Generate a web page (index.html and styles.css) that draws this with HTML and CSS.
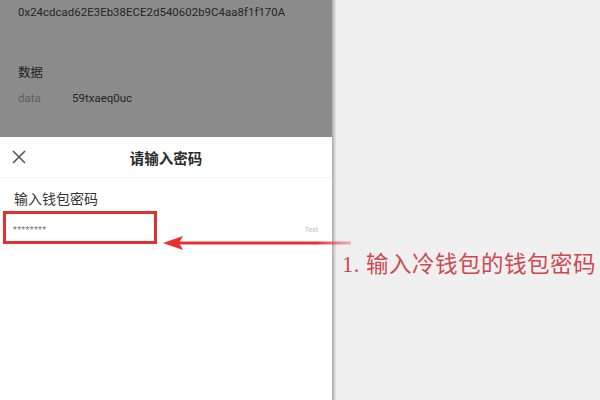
FILE: index.html
```html
<!DOCTYPE html>
<html>
<head>
<meta charset="utf-8">
<link rel="stylesheet" href="styles.css">
</head>
<body>
<div class="page">
  <div class="phone">
    <div class="dim">
      <div class="addr">0x24cdcad62E3Eb38ECE2d540602b9C4aa8f1f170A</div>
      <div class="sec-title">数据</div>
      <div class="kv"><span class="k">data</span><span class="v">59txaeq0uc</span></div>
    </div>
    <div class="sheet">
      <div class="sheet-head">
        <svg class="close" width="16" height="16" viewBox="0 0 16 16"><path d="M2 2 L14 14 M14 2 L2 14" stroke="#555" stroke-width="1.6" fill="none"/></svg>
        <div class="sheet-title">请输入密码</div>
      </div>
      <div class="field-label">输入钱包密码</div>
      <div class="field">
        <span class="dots">********</span>
        <span class="hint">Text</span>
      </div>
    </div>
  </div>
  <div class="divider"></div>
  <div class="notes">
    <div class="note">1. 输入冷钱包的钱包密码</div>
  </div>
  <div class="mark"></div>
  <svg class="arrow" width="200" height="20" viewBox="0 0 200 20">
    <defs>
      <linearGradient id="g" x1="0" x2="1" y1="0" y2="0">
        <stop offset="0" stop-color="#e8302c"/>
        <stop offset="0.8" stop-color="#e8302c"/>
        <stop offset="1" stop-color="#e8302c" stop-opacity="0.3"/>
      </linearGradient>
    </defs>
    <rect x="14" y="8.5" width="174" height="3" fill="url(#g)"/>
    <path d="M0 10 L20 3 L16 10 L20 17 Z" fill="#e8302c"/>
  </svg>
</div>
</body>
</html>
```
FILE: styles.css
```css
html, body {
  margin: 0;
  padding: 0;
}
body {
  width: 600px;
  height: 400px;
  overflow: hidden;
  font-family: Roboto, "Noto Sans CJK SC", sans-serif;
  background: #f0f0f0;
}
.page {
  position: relative;
  display: flex;
  width: 600px;
  height: 400px;
}
.phone {
  width: 332px;
  flex: none;
  display: flex;
  flex-direction: column;
  background: #fff;
}
.dim {
  height: 137px;
  background: #8b8b8b;
  padding: 5px 0 0 18px;
  box-sizing: border-box;
  color: #262626;
}
.addr {
  font-size: 11.4px;
  line-height: 14px;
  letter-spacing: 0.05px;
}
.sec-title {
  margin-top: 46px;
  font-size: 12.5px;
  line-height: 16px;
  color: #222;
}
.kv {
  margin-top: 10px;
  font-size: 11.5px;
  line-height: 14px;
  display: flex;
}
.k {
  width: 54px;
  color: #5e5e5e;
}
.v {
  color: #262626;
}
.sheet {
  flex: 1;
  background: #fff;
  display: flex;
  flex-direction: column;
}
.sheet-head {
  height: 40px;
  display: flex;
  align-items: center;
  position: relative;
  border-bottom: 1px solid #f2f2f2;
  padding-left: 11px;
}
.close {
  display: block;
}
.sheet-title {
  flex: 1;
  text-align: center;
  font-size: 14.5px;
  font-weight: 700;
  color: #2a2a2a;
  margin-right: 27px;
}
.field-label {
  margin: 12px 0 0 14px;
  font-size: 14px;
  line-height: 18px;
  color: #333;
}
.field {
  margin-top: 6px;
  height: 32px;
  display: flex;
  align-items: center;
  justify-content: space-between;
  padding: 0 14px 0 13px;
}
.dots {
  font-size: 9px;
  color: #777;
  letter-spacing: 0.3px;
}
.hint {
  font-size: 7px;
  color: #bbb;
}
.divider {
  width: 4px;
  flex: none;
  background: linear-gradient(to right, #a8a8a8, #d0d0d0 60%, #e6e6e6);
}
.notes {
  flex: 1;
  padding: 250px 0 0 6px;
}
.note {
  font-family: "Liberation Serif", "Noto Sans CJK SC", serif;
  font-size: 22.5px;
  line-height: 30px;
  color: #cf4a4f;
  letter-spacing: 0.5px;
  white-space: nowrap;
}
.mark {
  position: absolute;
  left: 3px;
  top: 211px;
  width: 148px;
  height: 27px;
  border: 3px solid #e2302f;
}
.arrow {
  position: absolute;
  left: 163px;
  top: 233px;
}
```
